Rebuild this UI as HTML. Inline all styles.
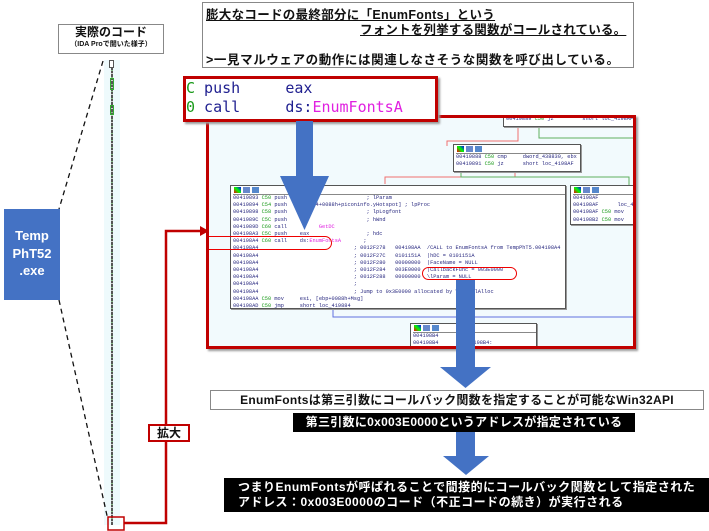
<!DOCTYPE html>
<html><head><meta charset="utf-8"><style>
*{margin:0;padding:0;box-sizing:border-box}
body{width:709px;height:531px;background:#fff;position:relative;overflow:hidden;font-family:"Liberation Sans","Noto Sans CJK JP",sans-serif}
.a{position:absolute}
.jp{font-weight:bold;color:#111}
.code{font-family:"Liberation Mono",monospace;font-size:5.3px;line-height:7.2px;color:#2a2a80;white-space:pre}
.blk{position:absolute;background:#fff;border:1px solid #555;box-shadow:1px 1px 0 #999;overflow:hidden}
.hdr{height:9px;border-bottom:1px solid #888;position:relative}
.hdr i{position:absolute;top:1px;width:7px;height:6px;display:block}
.g{color:#1a9a1a}.m{color:#e020e0}
</style></head><body>

<div class="a" style="left:202px;top:2px;width:432px;height:66px;border:1px solid #888;background:#fff"></div>
<div class="a jp" style="left:206px;top:4px;font-size:12.5px;text-decoration:underline;letter-spacing:0.3px">膨大なコードの最終部分に「EnumFonts」という</div>
<div class="a jp" style="left:360px;top:19px;font-size:12.5px;text-decoration:underline;letter-spacing:0.2px">フォントを列挙する関数がコールされている。</div>
<div class="a jp" style="left:206px;top:49px;font-size:12.5px;letter-spacing:0.6px">&gt;一見マルウェアの動作には関連しなさそうな関数を呼び出している。</div>

<div class="a" style="left:58px;top:24px;width:106px;height:30px;border:1px solid #888;background:#fff;text-align:center">
<div class="jp" style="font-size:12px;line-height:15px">実際のコード</div>
<div class="jp" style="font-size:7px;line-height:9px">（IDA Proで開いた様子）</div></div>

<div class="a" style="left:104px;top:60px;width:16px;height:465px;background:#eefafc"></div>
<div class="a" style="left:111px;top:60px;width:2px;height:465px;background:repeating-linear-gradient(#555 0 3px,#8b8 3px 4px,#555 4px 6px,#ccc 6px 7px)"></div>
<div class="a" style="left:109px;top:60px;width:5px;height:8px;border:1px solid #555;background:#fff"></div>
<div class="a" style="left:110px;top:78px;width:4px;height:12px;border:1px solid #3a3"></div>
<div class="a" style="left:110px;top:105px;width:4px;height:10px;border:1px solid #3a3"></div>

<svg class="a" style="left:0;top:0" width="709" height="531">
<line x1="103" y1="61" x2="59" y2="209" stroke="#111" stroke-width="1.3" stroke-dasharray="5,4"/>
<line x1="59" y1="300" x2="108" y2="520" stroke="#111" stroke-width="1.3" stroke-dasharray="5,4"/>
<polyline points="124,523 166,523 166,231 200,231" fill="none" stroke="#c00000" stroke-width="2.5"/>
<polygon points="200,226 209,231 200,236" fill="#c00000"/>
<rect x="108" y="517" width="16" height="13" fill="none" stroke="#c00000" stroke-width="1.5"/>
</svg>
<div class="a" style="left:4px;top:209px;width:56px;height:91px;background:#4472c4;color:#fff;font-weight:bold;font-size:13px;line-height:17.5px;text-align:center;padding-top:18px">Temp<br>PhT52<br>.exe</div>
<div class="a jp" style="left:148px;top:424px;width:42px;height:18px;border:2px solid #c00000;background:#fff;font-size:12px;line-height:14px;text-align:center">拡大</div>

<div class="a" style="left:206px;top:115px;width:430px;height:234px;border:3px solid #c00000;background:#f2fafd;overflow:hidden;box-shadow:2px 2px 2px #999">
 <svg class="a" style="left:0;top:0" width="430" height="234">
  <polyline points="309,8 309,23 238,23 238,28" fill="none" stroke="#f07070" stroke-width="1"/>
  <polyline points="330,8 330,20 430,20" fill="none" stroke="#60b060" stroke-width="1"/>
  <polyline points="306,52 306,59 176,59 176,66" fill="none" stroke="#f07070" stroke-width="1"/>
  <polyline points="252,52 252,59 420,59 420,68" fill="none" stroke="#60b060" stroke-width="1"/>
  <polyline points="124,189 124,199 430,199" fill="none" stroke="#6070e0" stroke-width="1"/>
 </svg>
 <div class="blk code" style="left:294px;top:-3px;width:140px;height:12px;padding-left:2px">00419889 <span class="g">C50</span> jz         short loc_4198AF</div>
 <div class="blk code" style="left:244px;top:26px;width:128px;height:28px;padding-left:2px"><div class="hdr"><i style="left:1px;background:linear-gradient(45deg,red,lime,blue)"></i><i style="left:10px;background:#68c"></i><i style="left:19px;background:#58c"></i></div>00419888 <span class="g">C50</span> cmp     dword_438830, ebx
00419891 <span class="g">C50</span> jz      short loc_4198AF</div>
 <div class="blk code" style="left:21px;top:67px;width:336px;height:124px;padding-left:2px"><div class="hdr"><i style="left:1px;background:linear-gradient(45deg,red,lime,blue)"></i><i style="left:10px;background:#68c"></i><i style="left:19px;background:#58c"></i></div>00419893 <span class="g">C50</span> push                         ; lParam
00419894 <span class="g">C54</span> push    [eax*4+0088h+piconinfo.yHotspot] ; lpProc
00419898 <span class="g">C58</span> push                         ; lpLogfont
0041989C <span class="g">C5C</span> push                         ; hWnd
0041989D <span class="g">C60</span> call          <span class="m">GetDC</span>
004198A3 <span class="g">C5C</span> push    eax                  ; hdc
004198A4 <span class="g">C60</span> call    ds:<span class="m">EnumFontsA</span>       ;
004198A4                              ; 0012F278   004198AA  /CALL to EnumFontsA from TempPhT5.004198A4
004198A4                              ; 0012F27C   0101151A  |hDC = 0101151A
004198A4                              ; 0012F280   00000000  |FaceName = NULL
004198A4                              ; 0012F284   003E0000  |CallbackFunc = 003E0000
004198A4                              ; 0012F288   00000000  \lParam = NULL
004198A4                              ;
004198A4                              ; Jump to 0x3E0000 allocated by VirtualAlloc
004198AA <span class="g">C50</span> mov     esi, [ebp+0088h+Msg]
004198AD <span class="g">C50</span> jmp     short loc_419884</div>
 <div class="blk code" style="left:361px;top:67px;width:80px;height:40px;padding-left:2px"><div class="hdr"><i style="left:1px;background:linear-gradient(45deg,red,lime,blue)"></i><i style="left:10px;background:#68c"></i><i style="left:19px;background:#58c"></i></div>004198AF
004198AF      loc_4198AF
004198AF <span class="g">C50</span> mov
004198B2 <span class="g">C50</span> mov</div>
 <div class="blk code" style="left:201px;top:205px;width:127px;height:40px;padding-left:2px"><div class="hdr"><i style="left:1px;background:linear-gradient(45deg,red,lime,blue)"></i><i style="left:10px;background:#68c"></i><i style="left:19px;background:#58c"></i></div>004198B4
004198B4      loc_4198B4:</div>
 <div class="a" style="left:-7px;top:118px;width:130px;height:14px;border:1.5px solid #e00;border-radius:7px"></div>
 <div class="a" style="left:213px;top:149px;width:95px;height:13px;border:1.5px solid #e00;border-radius:7px"></div>
</div>

<div class="a" style="left:183px;top:76px;width:255px;height:46px;border:3px solid #c00000;background:#fff;font-family:'DejaVu Sans Mono','Liberation Mono',monospace;font-size:15px;line-height:19px;color:#202090;white-space:pre;overflow:hidden;box-shadow:2px 2px 2px #999"><span class="g">C</span> push     eax
<span class="g">0</span> call     ds:<span class="m">EnumFontsA</span></div>

<svg class="a" style="left:0;top:0" width="709" height="531">
<rect x="296" y="121" width="17" height="55" fill="#4472c4"/>
<polygon points="280,176 329,176 304.5,230" fill="#4472c4"/>
<rect x="456" y="280" width="19" height="88" fill="#4472c4"/>
<polygon points="440,367 491,367 465.5,388" fill="#4472c4"/>
<rect x="456" y="432" width="19" height="25" fill="#4472c4"/>
<polygon points="443,456 489,456 466,475" fill="#4472c4"/>
</svg>

<div class="a jp" style="left:210px;top:390px;width:494px;height:20px;border:1px solid #888;background:#fff;font-size:12px;line-height:18px;text-align:center;letter-spacing:0.3px">EnumFontsは第三引数にコールバック関数を指定することが可能なWin32API</div>
<div class="a" style="left:293px;top:413px;width:342px;height:19px;background:#000;color:#fff;font-weight:bold;font-size:12px;line-height:19px;text-align:center;letter-spacing:0.3px">第三引数に0x003E0000というアドレスが指定されている</div>
<div class="a" style="left:224px;top:478px;width:485px;height:34px;background:#000;color:#fff;font-weight:bold;font-size:12px;line-height:15px;padding:2px 0 0 14px;letter-spacing:0.5px">つまりEnumFontsが呼ばれることで間接的にコールバック関数として指定された<br>アドレス：0x003E0000のコード（不正コードの続き）が実行される</div>
</body></html>
